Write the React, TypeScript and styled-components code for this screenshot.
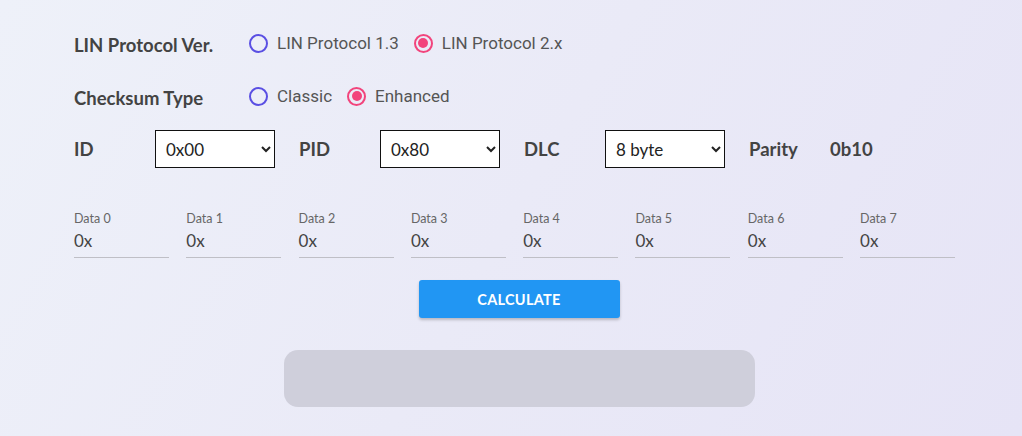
import React from "react";
import styled, { createGlobalStyle } from "styled-components";

const GlobalStyle = createGlobalStyle`
  html, body {
    margin: 0;
    padding: 0;
  }
  body {
    background: linear-gradient(120deg, #eef1f9 0%, #eaeaf7 50%, #e6e4f6 100%);
    min-height: 436px;
    font-family: Lato, "Liberation Sans", sans-serif;
    color: #424242;
  }
`;

const Page = styled.div`
  width: 890px;
  padding: 30px 0 0 74px;
  display: flex;
  flex-direction: column;
`;

const OptionRow = styled.div<{ $gap: number }>`
  display: flex;
  align-items: center;
  height: 26px;
  margin-bottom: ${(p) => p.$gap}px;
`;

const RowLabel = styled.div`
  width: 175px;
  font-weight: 700;
  font-size: 18.5px;
  color: #434343;
  padding-top: 3px;
`;

const RadioOption = styled.label`
  display: flex;
  align-items: center;
  gap: 9px;
  margin-right: 15px;
  font-family: Roboto, "Liberation Sans", sans-serif;
  font-size: 17px;
  color: #555;
`;

const RadioCircle = styled.span<{ $checked: boolean }>`
  width: 19px;
  height: 19px;
  box-sizing: border-box;
  border-radius: 50%;
  border: 2px solid ${(p) => (p.$checked ? "#f2447c" : "#5a4fe3")};
  display: flex;
  align-items: center;
  justify-content: center;

  &::after {
    content: "";
    display: ${(p) => (p.$checked ? "block" : "none")};
    width: 10px;
    height: 10px;
    border-radius: 50%;
    background: #f2447c;
  }
`;

const FrameRow = styled.div`
  display: flex;
  align-items: center;
  height: 38px;
`;

const FieldLabel = styled.div`
  width: 81px;
  font-weight: 700;
  font-size: 18.5px;
  color: #434343;
`;

const Select = styled.select`
  width: 120px;
  height: 38px;
  margin-right: 24px;
  box-sizing: border-box;
  border: 1px solid #111;
  border-radius: 0;
  background: #fff;
  padding: 0 6px;
  font-family: Lato, "Liberation Sans", sans-serif;
  font-size: 17px;
  color: #222;
`;

const ParityValue = styled.div`
  font-weight: 700;
  font-size: 18.5px;
  color: #434343;
`;

const DataGrid = styled.div`
  display: grid;
  grid-template-columns: repeat(8, 95px);
  column-gap: 17.3px;
  margin-top: 43px;
`;

const DataField = styled.div`
  display: flex;
  flex-direction: column;
  border-bottom: 1px solid #bfbfc6;
  height: 46px;
`;

const DataLabel = styled.span`
  font-size: 12.5px;
  color: #666;
  line-height: 16px;
`;

const DataValue = styled.span`
  font-size: 17px;
  color: #444;
  line-height: 22px;
  margin-top: 3px;
`;

const Center = styled.div`
  display: flex;
  flex-direction: column;
  align-items: center;
`;

const CalcButton = styled.button`
  margin-top: 22px;
  width: 201px;
  height: 38px;
  border: none;
  border-radius: 3px;
  background: #2196f3;
  color: #fff;
  font-family: Lato, "Liberation Sans", sans-serif;
  font-weight: 700;
  font-size: 14.5px;
  letter-spacing: 0.3px;
  box-shadow: 0 2px 3px rgba(0, 0, 0, 0.22);
`;

const ResultBox = styled.div`
  margin-top: 32px;
  width: 471px;
  height: 57px;
  border-radius: 14px;
  background: #cfcfdb;
`;

const protocols = [
  { label: "LIN Protocol 1.3", checked: false },
  { label: "LIN Protocol 2.x", checked: true },
];

const checksums = [
  { label: "Classic", checked: false },
  { label: "Enhanced", checked: true },
];

export default function App() {
  return (
    <>
      <GlobalStyle />
      <Page>
        <OptionRow $gap={27}>
          <RowLabel>LIN Protocol Ver.</RowLabel>
          {protocols.map((o) => (
            <RadioOption key={o.label}>
              <RadioCircle $checked={o.checked} />
              {o.label}
            </RadioOption>
          ))}
        </OptionRow>
        <OptionRow $gap={21}>
          <RowLabel>Checksum Type</RowLabel>
          {checksums.map((o) => (
            <RadioOption key={o.label}>
              <RadioCircle $checked={o.checked} />
              {o.label}
            </RadioOption>
          ))}
        </OptionRow>
        <FrameRow>
          <FieldLabel>ID</FieldLabel>
          <Select defaultValue="0x00">
            <option>0x00</option>
          </Select>
          <FieldLabel>PID</FieldLabel>
          <Select defaultValue="0x80">
            <option>0x80</option>
          </Select>
          <FieldLabel>DLC</FieldLabel>
          <Select defaultValue="8 byte">
            <option>8 byte</option>
          </Select>
          <FieldLabel>Parity</FieldLabel>
          <ParityValue>0b10</ParityValue>
        </FrameRow>
        <DataGrid>
          {Array.from({ length: 8 }, (_, i) => (
            <DataField key={i}>
              <DataLabel>Data {i}</DataLabel>
              <DataValue>0x</DataValue>
            </DataField>
          ))}
        </DataGrid>
        <Center>
          <CalcButton>CALCULATE</CalcButton>
          <ResultBox />
        </Center>
      </Page>
    </>
  );
}
